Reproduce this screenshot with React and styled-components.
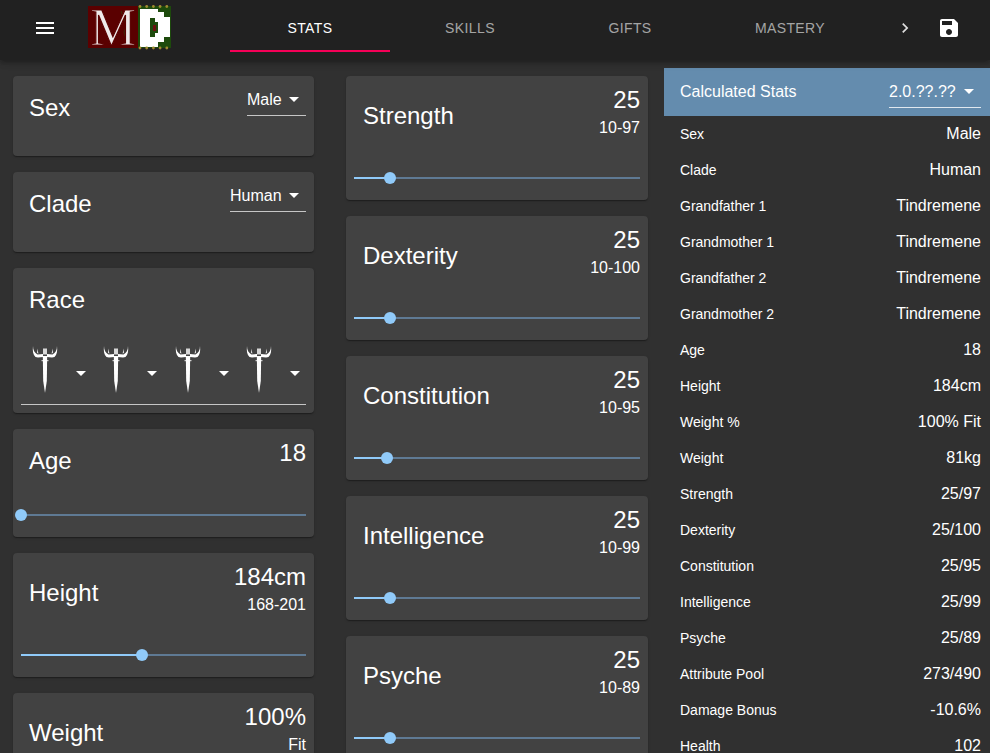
import React from "react";
import styled, { createGlobalStyle } from "styled-components";

const GlobalStyle = createGlobalStyle`
    html, body {
        margin: 0;
        padding: 0;
        background: #303030;
        color: #fff;
        font-family: "Liberation Sans", Arial, sans-serif;
    }
`;

const leftStats = [
    { name: "Age", value: "18", pct: 0 },
    { name: "Height", value: "184cm", range: "168-201", pct: 42.5 },
    { name: "Weight", value: "100%", range: "Fit", pct: 50 },
];

const midStats = [
    { name: "Strength", value: "25", range: "10-97", pct: 12.6 },
    { name: "Dexterity", value: "25", range: "10-100", pct: 12.6 },
    { name: "Constitution", value: "25", range: "10-95", pct: 11.5 },
    { name: "Intelligence", value: "25", range: "10-99", pct: 12.6 },
    { name: "Psyche", value: "25", range: "10-89", pct: 12.6 },
];

const calculated = [
    ["Sex", "Male"],
    ["Clade", "Human"],
    ["Grandfather 1", "Tindremene"],
    ["Grandmother 1", "Tindremene"],
    ["Grandfather 2", "Tindremene"],
    ["Grandmother 2", "Tindremene"],
    ["Age", "18"],
    ["Height", "184cm"],
    ["Weight %", "100% Fit"],
    ["Weight", "81kg"],
    ["Strength", "25/97"],
    ["Dexterity", "25/100"],
    ["Constitution", "25/95"],
    ["Intelligence", "25/99"],
    ["Psyche", "25/89"],
    ["Attribute Pool", "273/490"],
    ["Damage Bonus", "-10.6%"],
    ["Health", "102"],
];

const tabs = ["Stats", "Skills", "Gifts", "Mastery"];

const Logo = () => {
    const dots = [0, 1, 2, 3, 4];
    return (
        <LogoSvg viewBox="0 0 84 44" aria-label="MD">
            <rect x="0" y="1" width="50" height="42" fill="#5a0000" />
            <rect x="50" y="1" width="33" height="42" fill="#1d4a0c" />
            <path d="M33 6L36 14L39 20L36 27L38 34L46 41" fill="none" stroke="#2c4a10" strokeWidth="0.6" />
            <text x="2" y="40" fontFamily="Liberation Serif" fontSize="52" fill="#efe9e9" stroke="#5a0000" strokeWidth="1.2">M</text>
            <path d="M52 4H70V7H76V12H82V32H76V37H70V42H52Z M62 13V32H67V28H70V17H67V13Z" fill="#fff" fillRule="evenodd" />
            <rect x="65" y="20" width="3" height="6" fill="#6a1010" />
            {dots.map((d) => (
                <React.Fragment key={d}>
                    <circle cx={52 + d * 6.7} cy="1.5" r="1.4" fill="#a08a30" />
                    <circle cx={52 + d * 6.7} cy="43" r="1.4" fill="#a08a30" />
                </React.Fragment>
            ))}
        </LogoSvg>
    );
};

const Sword = () => (
    <SwordSvg viewBox="0 0 26 50">
        <path d="M1 1C1 5 2.5 8 5.5 9.5L11 9L11 12L6 12.5L3.5 12C1 9.5 0.4 6 1 1Z" fill="#fff" />
        <path d="M25 1C25 5 23.5 8 20.5 9.5L15 9L15 12L20 12.5L22.5 12C25 9.5 25.6 6 25 1Z" fill="#fff" />
        <path d="M5 3.5L6.5 8.5L5 8Z M21 3.5L19.5 8.5L21 8Z" fill="#ddd" />
        <rect x="11" y="3.5" width="4" height="6" fill="#d8d8d8" />
        <rect x="9.5" y="15" width="7" height="1.2" fill="#d0d0d0" />
        <path d="M10.8 11H15.2L14.8 36L13 48L11.2 36Z" fill="#fff" />
    </SwordSvg>
);

const Arrow = styled.span`
    width: 0;
    height: 0;
    border-left: 5px solid transparent;
    border-right: 5px solid transparent;
    border-top: 5px solid #fff;
    flex: none;
`;

const Select = ({ children, width }) => (
    <SelectBox $width={width}>
        <span>{children}</span>
        <Arrow />
    </SelectBox>
);

const Slider = ({ pct }) => (
    <SliderBox>
        <SliderTrack>
            <SliderFill style={{ width: `${pct}%` }} />
            <SliderThumb style={{ left: `${pct}%` }} />
        </SliderTrack>
    </SliderBox>
);

const StatCard = ({ stat, inset }) => (
    <Card>
        <CardRow>
            <CardTitle $inset={inset}>{stat.name}</CardTitle>
            <ValueCol>
                <Value>{stat.value}</Value>
                {stat.range && <Range>{stat.range}</Range>}
            </ValueCol>
        </CardRow>
        <Slider pct={stat.pct} />
    </Card>
);

const App = () => {
    return (
        <Page>
            <GlobalStyle />
            <AppBar>
                <MenuButton viewBox="0 0 24 24">
                    <path d="M3 18h18v-2H3v2zm0-5h18v-2H3v2zm0-7v2h18V6H3z" fill="#fff" />
                </MenuButton>
                <Logo />
                <TabBar>
                    {tabs.map((t, i) => (
                        <Tab key={t} $active={i === 0}>{t}</Tab>
                    ))}
                </TabBar>
                <ScrollIcon viewBox="0 0 24 24">
                    <path d="M10 6L8.59 7.41 13.17 12l-4.58 4.59L10 18l6-6z" fill="#fff" fillOpacity="0.85" />
                </ScrollIcon>
                <SaveIcon viewBox="0 0 24 24">
                    <path d="M17 3H5c-1.11 0-2 .9-2 2v14c0 1.1.89 2 2 2h14c1.1 0 2-.9 2-2V7l-4-4zm-5 16c-1.66 0-3-1.34-3-3s1.34-3 3-3 3 1.34 3 3-1.34 3-3 3zm3-10H5V5h10v4z" fill="#fff" />
                </SaveIcon>
            </AppBar>
            <Main>
                <Column>
                    <Card $min={80}>
                        <CardRow>
                            <CardTitle>Sex</CardTitle>
                            <Select width={59}>Male</Select>
                        </CardRow>
                    </Card>
                    <Card $min={80}>
                        <CardRow>
                            <CardTitle>Clade</CardTitle>
                            <Select width={76}>Human</Select>
                        </CardRow>
                    </Card>
                    <RaceCard>
                        <CardTitle>Race</CardTitle>
                        <RaceRow>
                            {[0, 1, 2, 3].map((i) => (
                                <RaceSelect key={i}>
                                    <Sword />
                                    <Arrow />
                                </RaceSelect>
                            ))}
                        </RaceRow>
                    </RaceCard>
                    {leftStats.map((s) => <StatCard key={s.name} stat={s} />)}
                </Column>
                <Column>
                    {midStats.map((s) => <StatCard key={s.name} stat={s} inset={9} />)}
                </Column>
                <Panel>
                    <PanelHeader>
                        <PanelTitle>Calculated Stats</PanelTitle>
                        <VersionSelect>
                            <span>2.0.??.??</span>
                            <Arrow />
                        </VersionSelect>
                    </PanelHeader>
                    {calculated.map(([label, val]) => (
                        <PanelRow key={label}>
                            <PanelLabel>{label}</PanelLabel>
                            <PanelValue>{val}</PanelValue>
                        </PanelRow>
                    ))}
                </Panel>
            </Main>
        </Page>
    );
};

export default App;

const Page = styled.div`
    height: 100vh;
    overflow: hidden;
    background: #303030;
`;

const AppBar = styled.header`
    position: relative;
    z-index: 2;
    height: 60px;
    background: #212121;
    display: flex;
    align-items: flex-start;
    box-shadow: 0 2px 4px -1px rgba(0,0,0,.2), 0 4px 5px 0 rgba(0,0,0,.14), 0 1px 10px 0 rgba(0,0,0,.12);
`;

const MenuButton = styled.svg`
    width: 24px;
    height: 24px;
    margin: 16px 0 0 33px;
    flex: none;
`;

const LogoSvg = styled.svg`
    width: 84px;
    height: 44px;
    margin: 5px 0 0 31px;
    flex: none;
    overflow: visible;
    filter: blur(0.4px);
`;

const TabBar = styled.nav`
    display: flex;
    margin-left: 58px;
    flex: none;
`;

const Tab = styled.div`
    width: 160px;
    height: 52px;
    box-sizing: border-box;
    padding-top: 20px;
    text-align: center;
    font-size: 14px;
    line-height: 17px;
    font-weight: 500;
    letter-spacing: .4px;
    text-transform: uppercase;
    color: ${(p) => (p.$active ? "#fff" : "rgba(255,255,255,.6)")};
    border-bottom: 2px solid ${(p) => (p.$active ? "#f50057" : "transparent")};
`;

const ScrollIcon = styled.svg`
    width: 20px;
    height: 20px;
    margin: 18px 0 0 25px;
    flex: none;
`;

const SaveIcon = styled.svg`
    width: 24px;
    height: 24px;
    margin: 16px 0 0 22px;
    flex: none;
`;

const Main = styled.main`
    display: grid;
    grid-template-columns: 301px 302px 326px;
    column-gap: 32px;
    padding: 8px 0 0 13px;
    align-items: start;
`;

const Column = styled.div`
    display: flex;
    flex-direction: column;
    gap: 16px;
    padding-top: 8px;
`;

const Card = styled.section`
    background: #424242;
    border-radius: 4px;
    box-shadow: 0 2px 1px -1px rgba(0,0,0,.2), 0 1px 1px 0 rgba(0,0,0,.14), 0 1px 3px 0 rgba(0,0,0,.12);
    min-height: ${(p) => (p.$min ? `${p.$min}px` : "0")};
    box-sizing: border-box;
    padding: 8px 8px 0;
`;

const CardRow = styled.div`
    display: flex;
    justify-content: space-between;
    align-items: center;
`;

const CardTitle = styled.h2`
    margin: 0;
    padding-left: ${(p) => p.$inset || 8}px;
    font-size: 24px;
    font-weight: 400;
    line-height: 48px;
    color: #fff;
`;

const ValueCol = styled.div`
    display: flex;
    flex-direction: column;
    align-items: flex-end;
    min-height: 48px;
    padding-bottom: 8px;
    box-sizing: border-box;
`;

const Value = styled.div`
    font-size: 24px;
    line-height: 32px;
`;

const Range = styled.div`
    font-size: 16px;
    line-height: 24px;
`;

const SelectBox = styled.div`
    align-self: flex-start;
    width: ${(p) => p.$width}px;
    height: 32px;
    box-sizing: border-box;
    display: flex;
    align-items: center;
    justify-content: space-between;
    padding: 0 7px 0 0;
    font-size: 16px;
    border-bottom: 1px solid rgba(255,255,255,.7);
`;

const SliderBox = styled.div`
    height: 44px;
    margin-top: 8px;
    display: flex;
    align-items: center;
`;

const SliderTrack = styled.div`
    position: relative;
    width: 100%;
    height: 2px;
    background: #5f7a94;
`;

const SliderFill = styled.div`
    height: 2px;
    background: #90caf9;
`;

const SliderThumb = styled.div`
    position: absolute;
    top: -5px;
    width: 12px;
    height: 12px;
    margin-left: -6px;
    border-radius: 50%;
    background: #90caf9;
`;

const RaceCard = styled(Card)`
    height: 145px;
    display: flex;
    flex-direction: column;
`;

const RaceRow = styled.div`
    display: grid;
    grid-template-columns: repeat(4, 1fr);
    height: 66px;
    margin-top: 15px;
    border-bottom: 1px solid rgba(255,255,255,.7);
    box-sizing: border-box;
`;

const RaceSelect = styled.div`
    display: flex;
    align-items: center;
    padding-left: 11px;
    gap: 18px;
    padding-top: 3px;
`;

const SwordSvg = styled.svg`
    width: 26px;
    height: 50px;
    flex: none;
    margin-bottom: 6px;
    filter: blur(0.3px);
`;

const Panel = styled.aside`
    margin-left: -16px;
    width: 326px;
`;

const PanelHeader = styled.div`
    height: 48px;
    background: #648cae;
    display: flex;
    align-items: center;
    justify-content: space-between;
    padding: 0 9px 0 16px;
`;

const PanelTitle = styled.div`
    font-size: 16px;
`;

const VersionSelect = styled.div`
    width: 92px;
    height: 32px;
    box-sizing: border-box;
    padding-right: 7px;
    display: flex;
    align-items: center;
    justify-content: space-between;
    font-size: 16px;
    border-bottom: 1px solid rgba(255,255,255,.8);
`;

const PanelRow = styled.div`
    height: 36px;
    display: flex;
    align-items: center;
    justify-content: space-between;
    padding: 0 9px 0 16px;
`;

const PanelLabel = styled.div`
    font-size: 14px;
`;

const PanelValue = styled.div`
    font-size: 16px;
`;
